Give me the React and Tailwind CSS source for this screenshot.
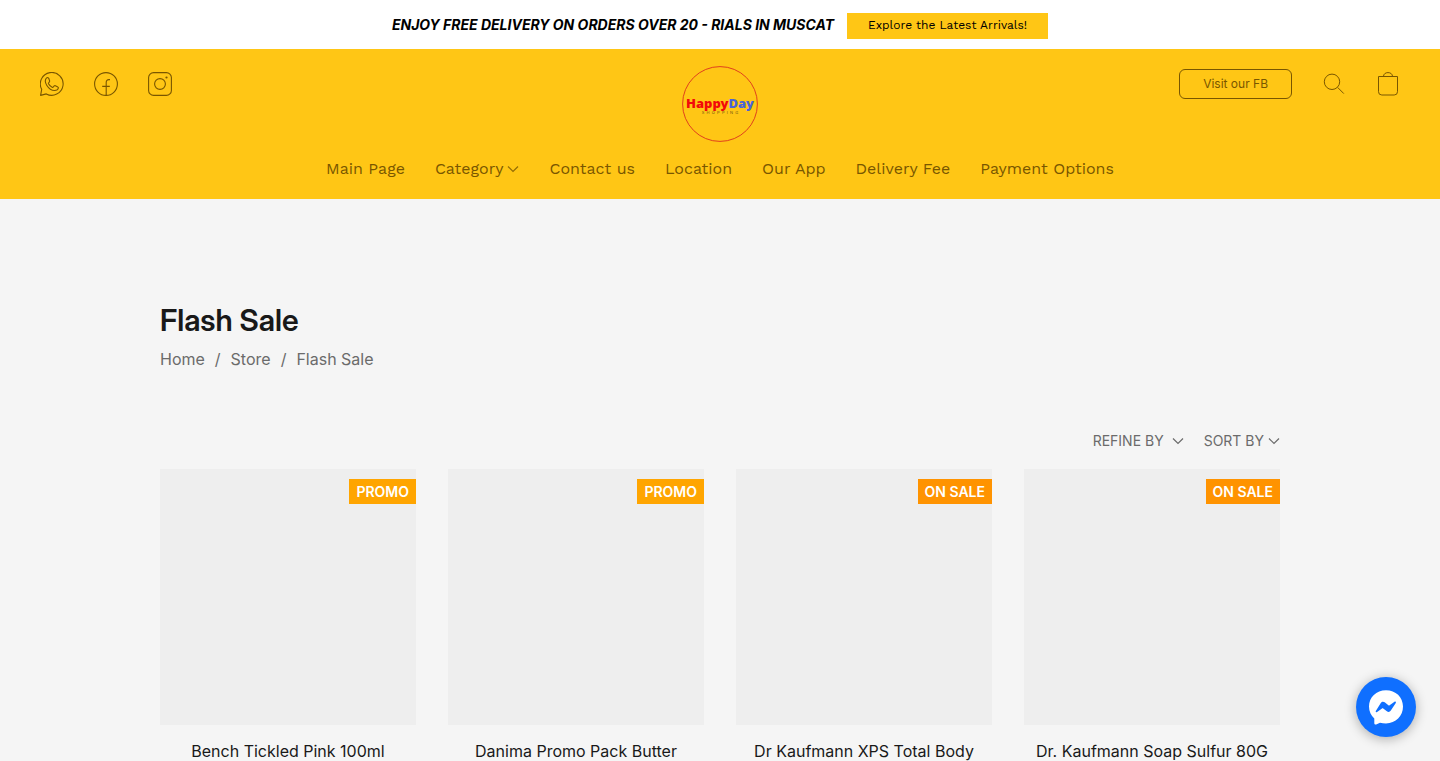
import React from "react";

const navItems = [
  { label: "Main Page" },
  { label: "Category", menu: true },
  { label: "Contact us" },
  { label: "Location" },
  { label: "Our App" },
  { label: "Delivery Fee" },
  { label: "Payment Options" },
];

const products = [
  { name: "Bench Tickled Pink 100ml", badge: "PROMO", tone: "bg-[#ffa500]" },
  { name: "Danima Promo Pack Butter", badge: "PROMO", tone: "bg-[#ffa500]" },
  { name: "Dr Kaufmann XPS Total Body", badge: "ON SALE", tone: "bg-[#ff9300]" },
  { name: "Dr. Kaufmann Soap Sulfur 80G", badge: "ON SALE", tone: "bg-[#ff9300]" },
];

function Chevron({ className = "" }) {
  return (
    <svg className={className} width="12" height="12" viewBox="0 0 12 12" fill="none" stroke="currentColor" strokeWidth="1.200" aria-hidden="true">
      <path d="M1 3.500 6 8.500l5-5" />
    </svg>
  );
}

function WhatsAppIcon() {
  return (
    <svg width="24" height="24" viewBox="0 0 24 24" fill="none" stroke="currentColor" strokeWidth="1.100" strokeLinejoin="round" aria-hidden="true">
      <path d="M.6 23.400 1.700 17.300A11.400 11.400 0 1 1 6.300 21.900Z" />
      <path d="M8.100 5.700c-.5-.3-1.200-.1-1.700.5-1.500 1.700-1.500 4.100.3 7 2 3.200 5 5.300 7.800 5.300 2 0 3.600-1 3.900-2.500.1-.5-.1-.9-.6-1.100l-2.400-1.200c-.5-.2-.9-.1-1.200.2l-.9 1.100c-.3.4-.7.4-1.200.2-1.700-.8-2.800-1.900-3.600-3.400-.2-.4-.2-.7.1-1l.8-1c.3-.3.3-.7.2-1.100L8.700 6.300c-.1-.3-.3-.5-.6-.6Z" />
    </svg>
  );
}

function FacebookIcon() {
  return (
    <svg width="24" height="24" viewBox="0 0 24 24" fill="none" stroke="currentColor" strokeWidth="1.100" aria-hidden="true">
      <circle cx="12" cy="12" r="11.400" />
      <path d="M12.200 23.400V10.500c0-2 1-2.900 2.600-2.900h1.200M8.200 14.400h7.600" />
    </svg>
  );
}

function InstagramIcon() {
  return (
    <svg width="24" height="24" viewBox="0 0 24 24" fill="none" stroke="currentColor" strokeWidth="1.100" aria-hidden="true">
      <rect x=".6" y=".6" width="22.800" height="22.800" rx="5" />
      <circle cx="12" cy="12" r="5.400" />
      <circle cx="18.500" cy="5.500" r="1.100" fill="currentColor" stroke="none" />
    </svg>
  );
}

function SearchIcon() {
  return (
    <svg width="24" height="24" viewBox="0 0 24 24" fill="none" stroke="currentColor" strokeWidth="1" aria-hidden="true">
      <circle cx="10" cy="9.800" r="7.700" />
      <path d="m15.600 15.400 6.200 6.200" />
    </svg>
  );
}

function BagIcon() {
  return (
    <svg width="24" height="24" viewBox="0 0 24 24" fill="none" stroke="currentColor" strokeWidth="1" aria-hidden="true">
      <path d="M2.500 4.500h19v15.200a3.300 3.300 0 0 1-3.300 3.300H5.800a3.300 3.300 0 0 1-3.300-3.300Z" />
      <path d="M7.500 4.500C7.500 2 9.500.6 12 .6s4.500 1.400 4.500 3.900" />
    </svg>
  );
}

function Logo() {
  return (
    <svg width="76" height="76" viewBox="0 0 76 76" role="img" aria-label="HappyDay Shopping">
      <circle cx="38" cy="38" r="37.400" fill="none" stroke="#e0401c" strokeWidth="1" />
      <text x="38" y="42" textAnchor="middle" fontSize="13" fontWeight="900" fontFamily="'Noto Sans', sans-serif">
        <tspan fill="#f20a0a">Happy</tspan>
        <tspan fill="#4a63d8">Day</tspan>
      </text>
      <text x="38" y="48" textAnchor="middle" fontSize="4" fontFamily="Inter, sans-serif" fill="#6b5212">
        {Array.from("SHOPPING").join("\u00a0\u00a0")}
      </text>
    </svg>
  );
}

export default function App() {
  return (
    <div className="bg-[#f5f5f5] font-['Inter',sans-serif] text-[#191919]">
      <aside className="flex items-start justify-center gap-[13px] bg-white pt-[13px] pb-2.5">
        <p className="text-sm font-bold italic leading-6 text-black">
          ENJOY FREE DELIVERY ON ORDERS OVER 20 - RIALS IN MUSCAT
        </p>
        <a href="#arrivals" className="bg-[#ffc615] px-[21px] pt-[3px] pb-[5px] font-['Work_Sans','Noto_Sans',sans-serif] text-xs leading-[18px] text-black">
          Explore the Latest Arrivals!
        </a>
      </aside>

      <header className="bg-[#ffc615] px-10 pt-[17px] pb-[18px] text-[#795600]">
        <div className="grid grid-cols-[1fr_auto_1fr] items-start">
          <div className="flex gap-[30px] pt-1.5">
            <a href="#whatsapp" aria-label="WhatsApp"><WhatsAppIcon /></a>
            <a href="#facebook" aria-label="Facebook"><FacebookIcon /></a>
            <a href="#instagram" aria-label="Instagram"><InstagramIcon /></a>
          </div>
          <a href="#home"><Logo /></a>
          <div className="flex items-center justify-end gap-[30px] pt-[3px]">
            <a href="#fb" className="rounded-md border border-[#795600] px-[23px] py-[5px] text-xs leading-[18px]">
              Visit our FB
            </a>
            <button type="button" aria-label="Search"><SearchIcon /></button>
            <button type="button" aria-label="Shopping bag"><BagIcon /></button>
          </div>
        </div>
        <nav className="mt-[15px] flex justify-center gap-[30px] font-['Work_Sans','Noto_Sans',sans-serif] text-base leading-6">
          {navItems.map((item) => (
            <a key={item.label} href="#nav" className="flex items-center gap-1">
              {item.label}
              {item.menu && <Chevron className="opacity-80" />}
            </a>
          ))}
        </nav>
      </header>

      <main className="mx-auto max-w-[1120px] pt-[101px]">
        <h1 className="font-['Inter_Display','Inter',sans-serif] text-[30px] font-semibold leading-10">Flash Sale</h1>
        <nav aria-label="Breadcrumb" className="mt-[7px] flex gap-2.5 text-base leading-6 text-[#6b6b6b]">
          <a href="#home">Home</a>
          <span>/</span>
          <a href="#store">Store</a>
          <span>/</span>
          <span>Flash Sale</span>
        </nav>

        <div className="mt-[60px] flex justify-end gap-5 text-sm leading-5 text-[#6b6b6b]">
          <button type="button" className="flex items-center gap-2">
            REFINE BY
            <Chevron />
          </button>
          <label className="flex items-center gap-1">
            <select aria-label="Sort by" className="field-sizing-content appearance-none bg-transparent">
              <option>SORT BY</option>
            </select>
            <Chevron />
          </label>
        </div>

        <ul className="mt-[18px] grid grid-cols-4 gap-8">
          {products.map((p) => (
            <li key={p.name}>
              <a href="#product" className="block">
                <div className="flex aspect-square items-start justify-end bg-[#eeeeee] pt-2.5">
                  <span className={`${p.tone} px-[7px] pt-[3px] pb-0.5 text-sm font-semibold leading-5 text-white`}>
                    {p.badge}
                  </span>
                </div>
                <p className="mt-4 text-center text-base leading-5">{p.name}</p>
              </a>
            </li>
          ))}
        </ul>
      </main>

      <button type="button" aria-label="Chat on Messenger" className="fixed right-6 bottom-6 flex size-[60px] items-center justify-center rounded-full bg-[#0f6fff] shadow-[0_2px_12px_rgba(0,0,0,0.3)]">
        <svg width="36" height="36" viewBox="0 0 36 36" aria-hidden="true">
          <path fill="#fff" d="M18 1.200C8.300 1.200 1 8.200 1 17.600c0 5 2 9.100 5.300 12v4.600c0 1 1 1.600 1.900 1.200l3.800-1.700c1.900.6 3.900.8 6 .8 9.700 0 17-7.300 17-16.900S27.700 1.200 18 1.200Z" />
          <path fill="#0f6fff" d="m7.800 21.900 5-7.900c.9-1.400 2.600-1.700 3.900-.7l3.700 2.900c.4.3.8.3 1.200 0l4.900-3.400c.8-.6 1.800.3 1.300 1.100l-5 7.700c-.9 1.400-2.600 1.700-3.900.7l-3.700-2.800c-.4-.3-.8-.3-1.200 0l-4.900 3.500c-.8.5-1.800-.3-1.300-1.100Z" />
        </svg>
      </button>
    </div>
  );
}
